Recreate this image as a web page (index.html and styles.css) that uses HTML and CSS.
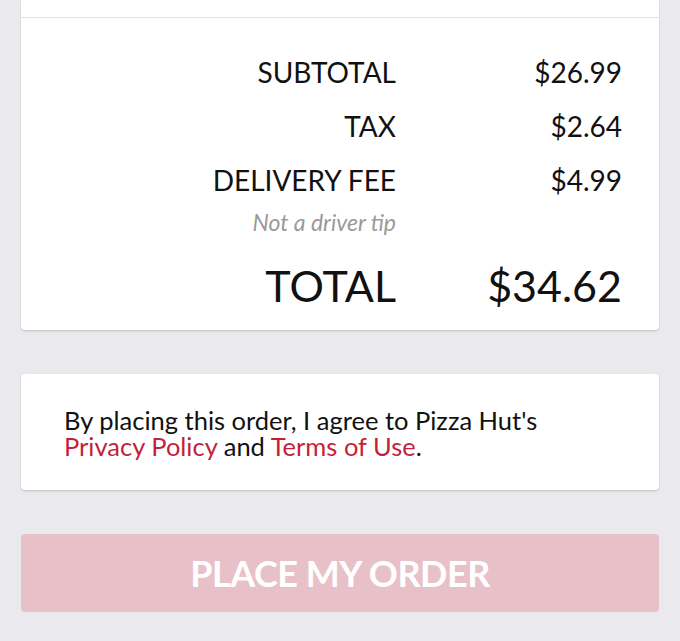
FILE: index.html
```html
<!DOCTYPE html>
<html>
<head>
<meta charset="utf-8">
<link rel="stylesheet" href="styles.css">
</head>
<body>
<div class="page">
  <section class="card summary">
    <div class="card-top"></div>
    <div class="rows">
      <div class="label">SUBTOTAL</div><div class="value">$26.99</div>
      <div class="label">TAX</div><div class="value">$2.64</div>
      <div class="label">DELIVERY FEE</div><div class="value">$4.99</div>
      <div class="label note">Not a driver tip</div><div class="value note"></div>
      <div class="label total">TOTAL</div><div class="value total">$34.62</div>
    </div>
  </section>
  <section class="card agree">
    <p>By placing this order, I agree to Pizza Hut's<br><a href="#">Privacy Policy</a> and <a href="#">Terms of Use</a>.</p>
  </section>
  <button class="place">PLACE MY ORDER</button>
</div>
</body>
</html>
```
FILE: styles.css
```css
html, body {
  margin: 0;
  padding: 0;
  background: #e9e9ee;
}
body {
  font-family: Lato, "Liberation Sans", sans-serif;
  color: #111;
}
.page {
  padding: 0 21px 0 21px;
  display: flex;
  flex-direction: column;
}
.card {
  background: #fff;
  border-radius: 0 0 4px 4px;
  box-shadow: 0 1px 2px rgba(0,0,0,0.18);
}
.card-top {
  height: 17px;
  border-bottom: 1px solid #e2e2e6;
}
.rows {
  display: grid;
  grid-template-columns: 1fr 226px;
  padding: 27px 37px 9px 0;
}
.label, .value {
  text-align: right;
  font-size: 28px;
  line-height: 54px;
  font-weight: 400;
}
.note {
  font-size: 23px;
  line-height: 30px;
  font-style: italic;
  color: #9a9a9a;
}
.total {
  font-size: 43px;
  line-height: 70px;
  margin-top: 14px;
}
.agree {
  margin-top: 44px;
  border-radius: 4px;
  padding: 33px 43px 31px 43px;
}
.agree p {
  margin: 0;
  font-size: 25.5px;
  line-height: 26px;
  color: #111;
}
.agree a {
  color: #c41f3b;
  text-decoration: none;
}
.place {
  margin-top: 44px;
  height: 78px;
  border: none;
  border-radius: 4px;
  background: #e8c1c8;
  color: #fff;
  font-family: Lato, "Liberation Sans", sans-serif;
  font-size: 36px;
  font-weight: 700;
  letter-spacing: -0.5px;
}
```
